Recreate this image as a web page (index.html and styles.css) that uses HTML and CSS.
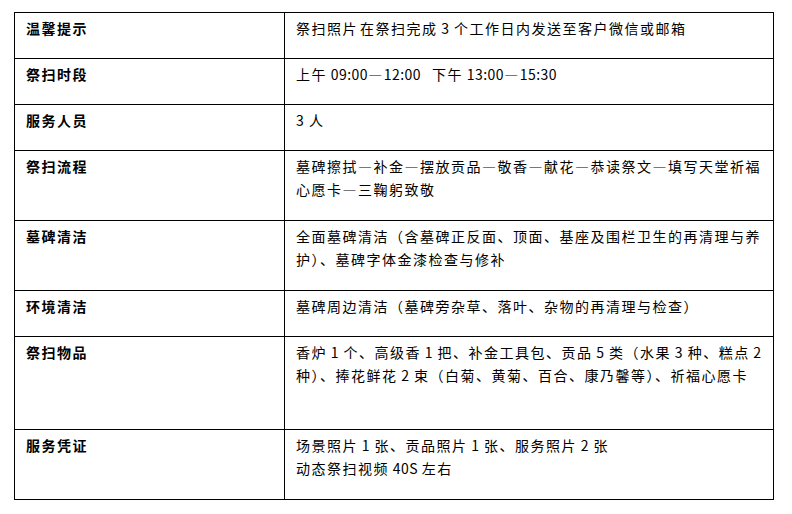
FILE: index.html
```html
<!DOCTYPE html>
<html lang="zh-CN">
<head>
<meta charset="utf-8">
<link rel="stylesheet" href="styles.css">
</head>
<body>
<table class="info">
  <tr class="r1">
    <th>温馨提示</th>
    <td>祭扫照片<span class="gap"></span>在祭扫完成 3 个工作日内发送至客户微信或邮箱</td>
  </tr>
  <tr class="r1">
    <th>祭扫时段</th>
    <td><span class="pre">上午 <span class="n">09:00</span>—<span class="n">12:00</span>   下午 <span class="n">13:00</span>—<span class="n">15:30</span></span></td>
  </tr>
  <tr class="r1">
    <th>服务人员</th>
    <td>3 人</td>
  </tr>
  <tr class="r2">
    <th>祭扫流程</th>
    <td>墓碑擦拭—补金—摆放贡品—敬香—献花—恭读祭文—填写天堂祈福<br>心愿卡—三鞠躬致敬</td>
  </tr>
  <tr class="r2">
    <th>墓碑清洁</th>
    <td>全面墓碑清洁（含墓碑正反面、顶面、基座及围栏卫生的再清理与养<br>护）、墓碑字体金漆检查与修补</td>
  </tr>
  <tr class="r1">
    <th>环境清洁</th>
    <td>墓碑周边清洁（墓碑旁杂草、落叶、杂物的再清理与检查）</td>
  </tr>
  <tr class="r3">
    <th>祭扫物品</th>
    <td>香炉 1 个、高级香 1 把、补金工具包、贡品 5 类（水果 3 种、糕点 2<br>种）、捧花鲜花 2 束（白菊、黄菊、百合、康乃馨等）、祈福心愿卡</td>
  </tr>
  <tr class="r2">
    <th>服务凭证</th>
    <td>场景照片 1 张、贡品照片 1 张、服务照片 2 张<br>动态祭扫视频 <span class="n">40S</span> 左右</td>
  </tr>
</table>
</body>
</html>
```

FILE: styles.css
```css
html, body {
  margin: 0;
  padding: 0;
  background: #fff;
}

body {
  padding: 12px 0 0 14px;
  font-family: "Noto Sans CJK SC", "Noto Sans", sans-serif;
  font-size: 14px;
  color: #000;
}

.info {
  border-collapse: collapse;
  width: 760px;
  table-layout: fixed;
}

.info th,
.info td {
  border: 1px solid #000;
  padding: 4px 8px 0 11px;
  vertical-align: top;
  text-align: left;
  line-height: 23px;
  letter-spacing: 1.5px;
  word-spacing: -1px;
  white-space: nowrap;
}

.info th {
  width: 250px;
  font-weight: bold;
}

.gap {
  display: inline-block;
  width: 2px;
}

.pre {
  white-space: pre;
}

.n {
  letter-spacing: 0.5px;
}

.r1 th, .r1 td { height: 41px; }
.r2 th, .r2 td { height: 65px; }
.r3 th, .r3 td { height: 88px; }
```
